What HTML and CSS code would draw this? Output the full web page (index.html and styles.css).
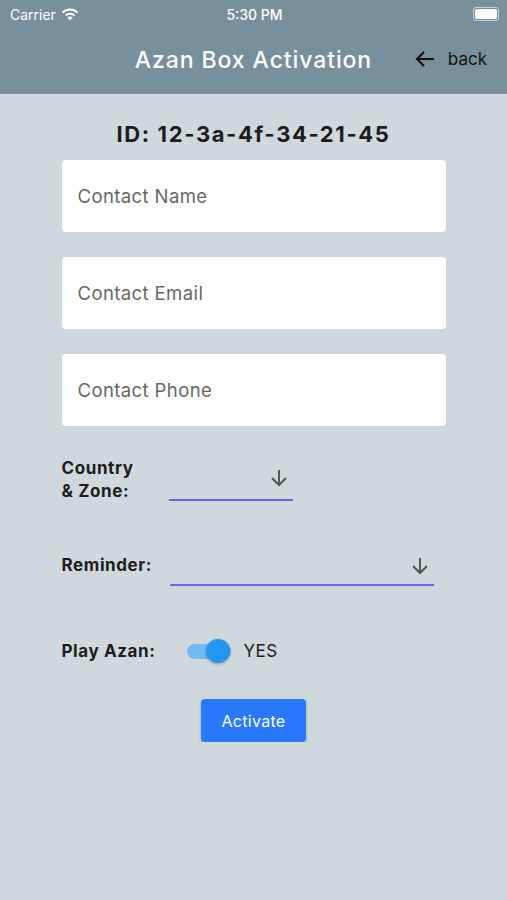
FILE: index.html
```html
<!DOCTYPE html>
<html>
  <head>
    <title>Azan Box Activation</title>
    <link rel="stylesheet" href="styles.css">
  </head>
  <body>
    <div class="app-header">
      <div class="status-bar">
        <div class="status-left">
          Carrier
          <svg class="wifi" width="18" height="13" viewBox="0 0 18 13">
            <path d="M9 12.5 L6.4 9.6 A3.8 3.8 0 0 1 11.6 9.6 Z" fill="#fff"/>
            <path d="M4.6 7.6 A6.4 6.4 0 0 1 13.4 7.6" stroke="#fff" stroke-width="2" fill="none"/>
            <path d="M1.6 4.6 A10.6 10.6 0 0 1 16.4 4.6" stroke="#fff" stroke-width="2" fill="none"/>
          </svg>
        </div>
        <div class="status-time">5:30 PM</div>
        <div class="status-right">
          <div class="battery"><div class="battery-fill"></div></div>
        </div>
      </div>
      <div class="title-bar">
        <div class="title">Azan Box Activation</div>
        <div class="back-link">
          <svg width="24" height="24" viewBox="0 0 24 24">
            <path d="M21 12H4 M11 5l-7 7 7 7" stroke="#111" stroke-width="2.2" fill="none"/>
          </svg>
          <span>back</span>
        </div>
      </div>
    </div>

    <div class="form">
      <div class="device-id">ID: 12-3a-4f-34-21-45</div>

      <div class="text-field">Contact Name</div>
      <div class="text-field">Contact Email</div>
      <div class="text-field">Contact Phone</div>

      <div class="row row-country">
        <div class="row-label">Country<br>&amp; Zone:</div>
        <div class="dropdown dropdown-short">
          <svg width="24" height="24" viewBox="0 0 24 24">
            <path d="M12 4v15 M5 12l7 7 7-7" stroke="#555" stroke-width="2" fill="none"/>
          </svg>
        </div>
      </div>

      <div class="row row-reminder">
        <div class="row-label">Reminder:</div>
        <div class="dropdown dropdown-long">
          <svg width="24" height="24" viewBox="0 0 24 24">
            <path d="M12 4v15 M5 12l7 7 7-7" stroke="#555" stroke-width="2" fill="none"/>
          </svg>
        </div>
      </div>

      <div class="row row-azan">
        <div class="row-label">Play Azan:</div>
        <div class="switch">
          <div class="switch-track"></div>
          <div class="switch-thumb"></div>
        </div>
        <div class="switch-text">YES</div>
      </div>

      <div class="actions">
        <div class="activate-button">Activate</div>
      </div>
    </div>
  </body>
</html>
```

FILE: styles.css
```css
body {
  margin: 0;
  background-color: #cfd8dc;
  font-family: Inter, "Noto Sans", sans-serif;
  color: #222;
}

.app-header {
  background-color: #78909c;
  height: 94px;
}

.status-bar {
  display: flex;
  justify-content: space-between;
  align-items: center;
  height: 28px;
  padding: 0 8px 0 10px;
  color: #fff;
  font-size: 14px;
}

.status-left {
  display: flex;
  align-items: center;
  gap: 5px;
  width: 120px;
}

.status-time {
  font-weight: 500;
  font-size: 14px;
}

.status-right {
  width: 120px;
  display: flex;
  justify-content: flex-end;
}

.battery {
  width: 22px;
  height: 10px;
  border: 1px solid rgba(255, 255, 255, 0.6);
  border-radius: 3px;
  padding: 1px;
}

.battery-fill {
  width: 100%;
  height: 100%;
  background-color: #fff;
  border-radius: 2px;
}

.title-bar {
  display: flex;
  align-items: center;
  height: 64px;
  position: relative;
}

.title {
  flex: 1;
  text-align: center;
  color: #fff;
  font-size: 23px;
  font-weight: 500;
  letter-spacing: 0.9px;
}

.back-link {
  position: absolute;
  right: 20px;
  top: 19px;
  display: flex;
  align-items: center;
  gap: 11px;
  font-size: 17px;
  color: #111;
}

.form {
  width: 384px;
  margin: 0 auto;
  padding-top: 27px;
}

.device-id {
  text-align: center;
  font-size: 22px;
  font-weight: 700;
  letter-spacing: 1.6px;
  color: #1d1d1d;
  margin-bottom: 13px;
}

.text-field {
  background-color: #fff;
  height: 72px;
  border-radius: 4px;
  display: flex;
  align-items: center;
  padding-left: 16px;
  font-size: 18.5px;
  letter-spacing: 0.4px;
  color: #666;
  margin-bottom: 25px;
}

.row {
  display: flex;
  align-items: flex-end;
}

.row-label {
  font-size: 17px;
  font-weight: 700;
  letter-spacing: 0.6px;
  color: #1d1d1d;
  line-height: 23px;
}

.row-country {
  margin-top: 31px;
}

.row-country .row-label {
  width: 107px;
}

.dropdown {
  border-bottom: 2px solid #7b5cf0;
  height: 32px;
  display: flex;
  justify-content: flex-end;
  align-items: flex-start;
  padding-right: 2px;
  box-sizing: border-box;
}

.dropdown-short {
  width: 124px;
  height: 35px;
  margin-bottom: 2px;
}

.row-reminder {
  margin-top: 51px;
}

.row-reminder .row-label {
  width: 108px;
  padding-bottom: 8px;
}

.dropdown-long {
  width: 264px;
  margin-bottom: -1px;
}

.row-azan {
  align-items: center;
  margin-top: 53px;
}

.row-azan .row-label {
  width: 125px;
}

.switch {
  position: relative;
  width: 44px;
  height: 26px;
}

.switch-track {
  position: absolute;
  left: 0;
  top: 6px;
  width: 44px;
  height: 15px;
  border-radius: 8px;
  background-color: #64b5f6;
  opacity: 0.85;
}

.switch-thumb {
  position: absolute;
  left: 19px;
  top: 1px;
  width: 24px;
  height: 24px;
  border-radius: 50%;
  background-color: #2196f3;
  box-shadow: 0 1px 3px rgba(0, 0, 0, 0.3);
}

.switch-text {
  margin-left: 13px;
  font-size: 17px;
  letter-spacing: 0.5px;
  color: #1d1d1d;
}

.actions {
  display: flex;
  justify-content: center;
  margin-top: 35px;
}

.activate-button {
  background-color: #2979ff;
  color: #fff;
  font-size: 16px;
  letter-spacing: 0.3px;
  width: 105px;
  height: 43px;
  border-radius: 4px;
  display: flex;
  align-items: center;
  justify-content: center;
  box-shadow: 0 2px 3px rgba(0, 0, 0, 0.25);
}
```
